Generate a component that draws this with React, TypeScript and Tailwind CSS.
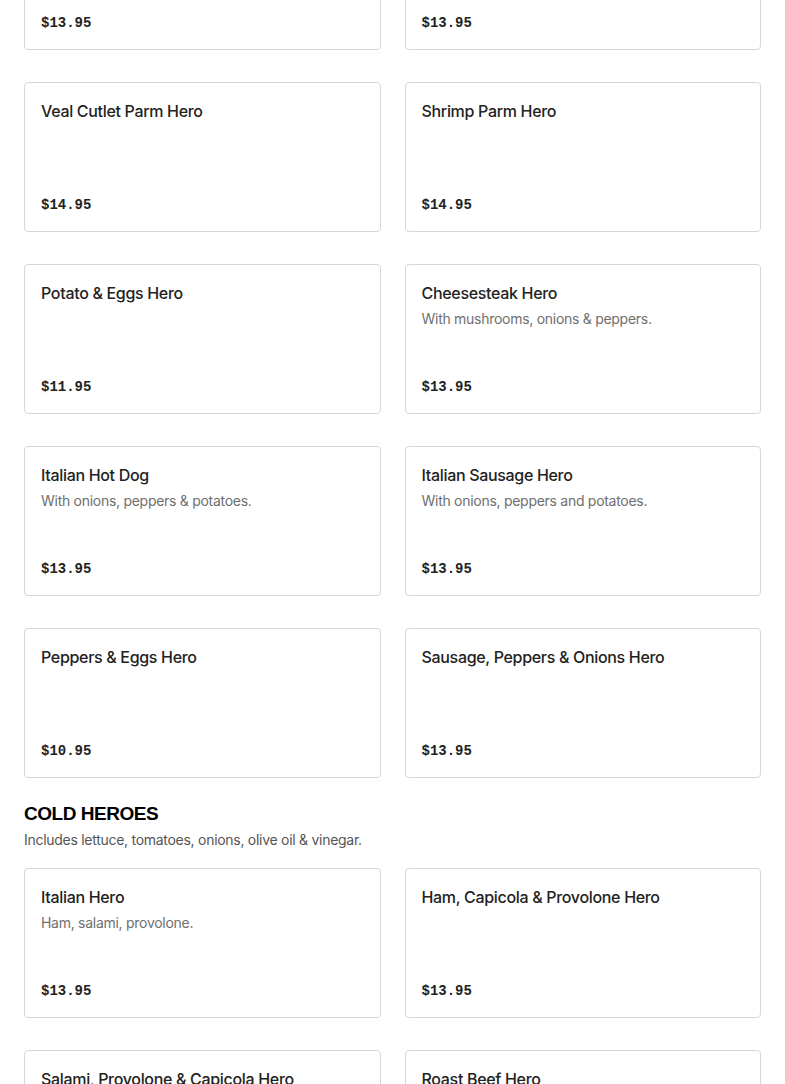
type Item = {
  name: string;
  desc?: string;
  price: string;
};

const hotHeroes: Item[] = [
  { name: 'Chicken Parm Hero', price: '$13.95' },
  { name: 'Meatball Parm Hero', price: '$13.95' },
  { name: 'Veal Cutlet Parm Hero', price: '$14.95' },
  { name: 'Shrimp Parm Hero', price: '$14.95' },
  { name: 'Potato & Eggs Hero', price: '$11.95' },
  { name: 'Cheesesteak Hero', desc: 'With mushrooms, onions & peppers.', price: '$13.95' },
  { name: 'Italian Hot Dog', desc: 'With onions, peppers & potatoes.', price: '$13.95' },
  { name: 'Italian Sausage Hero', desc: 'With onions, peppers and potatoes.', price: '$13.95' },
  { name: 'Peppers & Eggs Hero', price: '$10.95' },
  { name: 'Sausage, Peppers & Onions Hero', price: '$13.95' },
];

const coldHeroes: Item[] = [
  { name: 'Italian Hero', desc: 'Ham, salami, provolone.', price: '$13.95' },
  { name: 'Ham, Capicola & Provolone Hero', price: '$13.95' },
  { name: 'Salami, Provolone & Capicola Hero', price: '$13.95' },
  { name: 'Roast Beef Hero', price: '$13.95' },
];

function MenuCard({ item }: { item: Item }) {
  return (
    <div className="flex h-[150px] flex-col rounded border border-[#d6d6d6] bg-white px-4 py-4">
      <h3 className="text-[16px] leading-6 font-medium tracking-[-0.02em] text-[#222]">{item.name}</h3>
      {item.desc && (
        <p className="mt-1 text-[14px] leading-5 tracking-[-0.02em] text-[#6f6f6f]">{item.desc}</p>
      )}
      <p className="mt-auto font-['Liberation_Mono',monospace] text-[14px] leading-5 font-bold text-[#222]">
        {item.price}
      </p>
    </div>
  );
}

export default function App() {
  return (
    <div className="h-[1084px] overflow-hidden bg-white font-['Inter',sans-serif]">
      <div className="-mt-[100px] px-6">
        <div className="grid grid-cols-2 gap-x-6 gap-y-8">
          {hotHeroes.map((item) => (
            <MenuCard key={item.name} item={item} />
          ))}
        </div>

        {/* Cold Heroes */}
        <h2 className="mt-[22px] font-['Liberation_Sans',sans-serif] text-[19px] leading-7 font-black tracking-tight text-black">
          COLD HEROES
        </h2>
        <p className="mt-[2px] text-[14px] leading-5 tracking-[-0.02em] text-[#555]">
          Includes lettuce, tomatoes, onions, olive oil &amp; vinegar.
        </p>
        <div className="mt-[18px] grid grid-cols-2 gap-x-6 gap-y-8">
          {coldHeroes.map((item) => (
            <MenuCard key={item.name} item={item} />
          ))}
        </div>
      </div>
    </div>
  );
}
